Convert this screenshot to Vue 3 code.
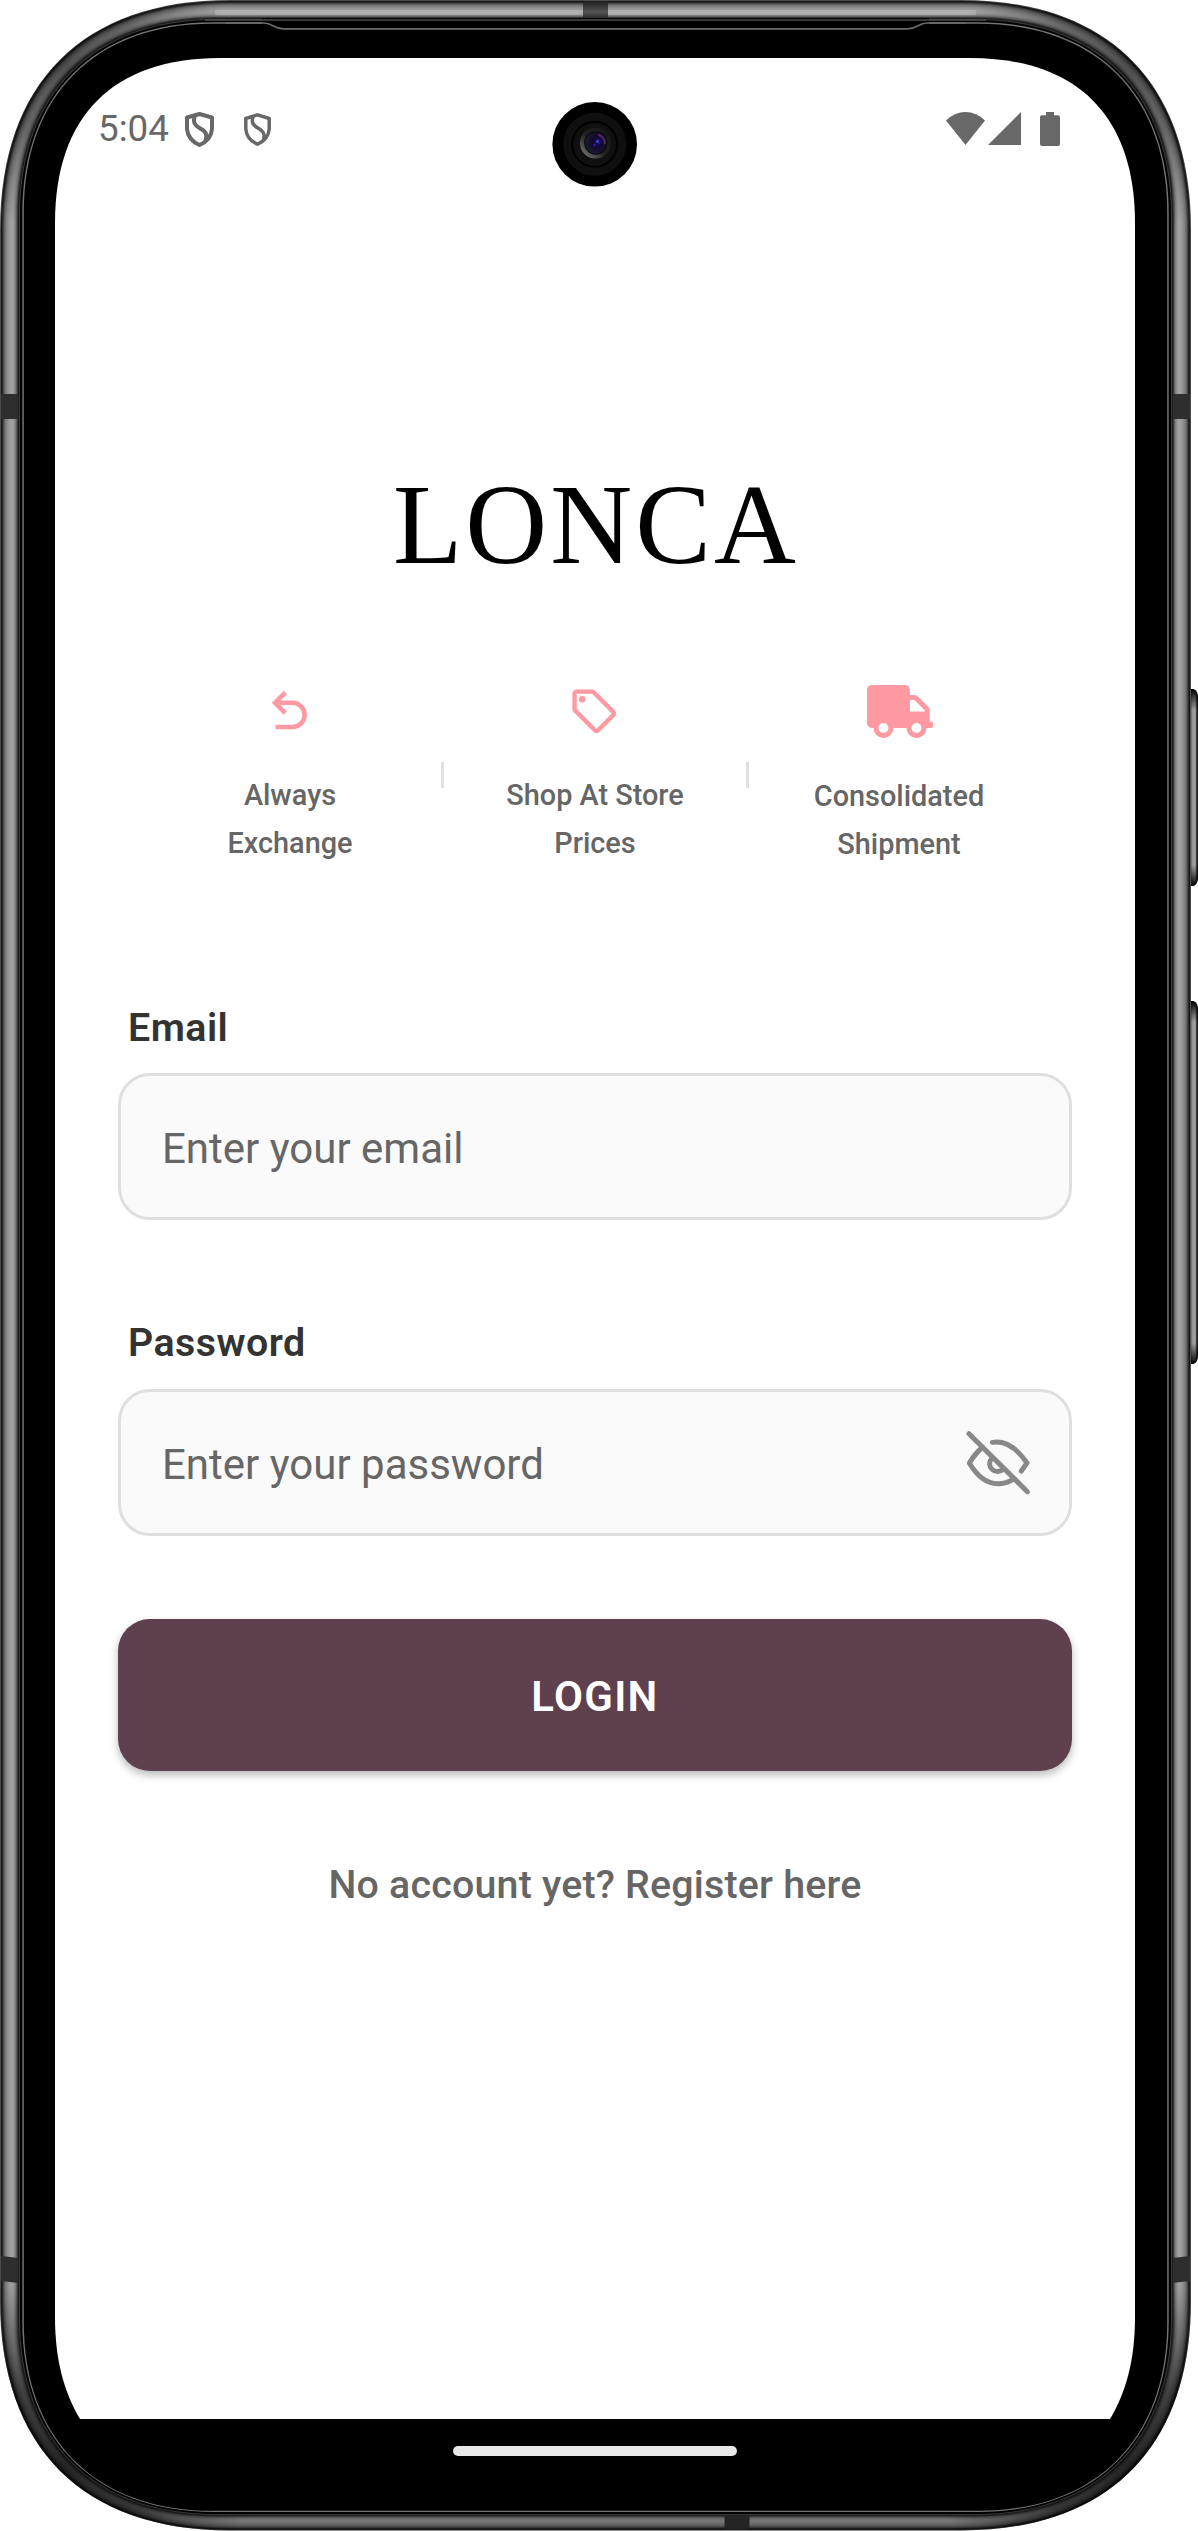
<script setup>
import { ref } from 'vue'

const email = ref('')
const password = ref('')

// Outline of the handset body, moved inwards by d pixels
function outline(d) {
  const l = d
  const t = d
  const r = 1191 - d
  const b = 2530.5 - d * 0.83
  const s = 230 - d * 1.74
  const c = 83 - d * 0.48
  return `M${l} ${t + s}C${l} ${t + c} ${l + c} ${t} ${l + s} ${t}H${r - s}C${r - c} ${t} ${r} ${t + c} ${r} ${t + s}V${b - s}C${r} ${b - c} ${r - c} ${b} ${r - s} ${b}H${l + s}C${l + c} ${b} ${l} ${b - c} ${l} ${b - s}Z`
}

const rim = [
  [0, '#4a4d4a'], [1, '#161616'], [2, '#2c2c2c'], [3, '#484848'], [4, '#626262'],
  [5, '#767676'], [6, '#828282'], [7, '#8c8c8c'], [8, '#949494'], [9, '#9a9a9a'],
  [10, '#a0a0a0'], [13, '#9a9a9a'], [14, '#8c8c8c'], [15, '#7c7c7c'], [16, '#606060'], [17, '#383838']
].map(([d, color]) => ({ d: outline(d), color }))

const inner = [
  [18, '#1c1c1c'], [19, '#3c3c3c'], [20, '#000'], [22.3, '#747474'], [23.8, '#000']
].map(([d, color]) => ({ d: outline(d), color }))

const body = outline(0)
</script>

<template>
  <div class="device">
    <svg class="frame" width="1198" height="2531" viewBox="0 0 1198 2531" aria-hidden="true">
      <defs>
        <radialGradient id="cornerTop">
          <stop offset="0" stop-color="#000" stop-opacity=".5" />
          <stop offset=".45" stop-color="#000" stop-opacity=".36" />
          <stop offset="1" stop-color="#000" stop-opacity="0" />
        </radialGradient>
        <radialGradient id="cornerBottom">
          <stop offset="0" stop-color="#000" stop-opacity=".7" />
          <stop offset=".45" stop-color="#000" stop-opacity=".54" />
          <stop offset="1" stop-color="#000" stop-opacity="0" />
        </radialGradient>
        <linearGradient id="bottomShade" x1="0" y1="0" x2="0" y2="1">
          <stop offset="0" stop-color="#000" stop-opacity="0" />
          <stop offset="1" stop-color="#000" stop-opacity=".28" />
        </linearGradient>
        <linearGradient id="key" x1="0" y1="0" x2="1" y2="0">
          <stop offset="0" stop-color="#555" />
          <stop offset=".35" stop-color="#9a9a9a" />
          <stop offset=".65" stop-color="#a4a4a4" />
          <stop offset=".85" stop-color="#2a2a2a" />
          <stop offset="1" stop-color="#111" />
        </linearGradient>
        <linearGradient id="keyEndTop" x1="0" y1="0" x2="0" y2="1">
          <stop offset="0" stop-color="#000" />
          <stop offset="1" stop-color="#000" stop-opacity="0" />
        </linearGradient>
        <linearGradient id="keyEndBottom" x1="0" y1="1" x2="0" y2="0">
          <stop offset="0" stop-color="#000" />
          <stop offset="1" stop-color="#000" stop-opacity="0" />
        </linearGradient>
        <linearGradient id="slotTop" x1="0" y1="0" x2="0" y2="1">
          <stop offset="0" stop-color="#1c1c1c" />
          <stop offset=".55" stop-color="#555" />
          <stop offset="1" stop-color="#151515" />
        </linearGradient>
        <linearGradient id="lens" x1="0" y1="1" x2="1" y2="0">
          <stop offset="0" stop-color="#8a8a8a" />
          <stop offset=".45" stop-color="#222" />
          <stop offset="1" stop-color="#141414" />
        </linearGradient>
        <radialGradient id="glass" cx=".6" cy=".45" r=".6">
          <stop offset="0" stop-color="#221880" />
          <stop offset=".35" stop-color="#100838" />
          <stop offset=".7" stop-color="#1a0e2c" />
          <stop offset="1" stop-color="#14262e" />
        </radialGradient>
        <clipPath id="bodyClip"><path :d="body" /></clipPath>
      </defs>

      <!-- power and volume keys -->
      <g>
        <path d="M1190 689h3.500q4.500 2 4.500 9v179q0 7-4.500 9H1190z" fill="url(#key)" />
        <path d="M1190 689h3.500q4.500 2 4.500 9v12h-8z" fill="url(#keyEndTop)" />
        <path d="M1190 865h8v12q0 7-4.500 9H1190z" fill="url(#keyEndBottom)" />
        <path d="M1190 1001h3.500q4.500 2 4.500 9v345q0 7-4.500 9H1190z" fill="url(#key)" />
        <path d="M1190 1001h3.500q4.500 2 4.500 9v12h-8z" fill="url(#keyEndTop)" />
        <path d="M1190 1343h8v12q0 7-4.500 9H1190z" fill="url(#keyEndBottom)" />
      </g>

      <path v-for="(layer, i) in rim" :key="'r' + i" :d="layer.d" :fill="layer.color" />
      <g clip-path="url(#bodyClip)">
        <path d="M215 12.500H976" stroke="#bcbcbc" stroke-width="5" opacity=".6" />
        <circle cx="68" cy="68" r="165" fill="url(#cornerTop)" />
        <circle cx="1123" cy="68" r="165" fill="url(#cornerTop)" />
        <circle cx="68" cy="2462" r="185" fill="url(#cornerBottom)" />
        <circle cx="1123" cy="2462" r="185" fill="url(#cornerBottom)" />
        <rect y="2260" width="1191" height="271" fill="url(#bottomShade)" />
        <path d="M1 394h18v25H1zM1172 394h18v25h-18zM1 2256l18 2v25l-18-2zM1190 2256l-18 2v25l18-2z" fill="#2e2e2e" />
        <rect x="583" y="1" width="25" height="20" fill="url(#slotTop)" />
        <rect x="724.500" y="2513" width="25" height="16" fill="#242424" />
      </g>
      <path v-for="(layer, i) in inner" :key="'i' + i" :d="layer.d" :fill="layer.color" />

      <!-- earpiece recess -->
      <path d="M262 18h667v8H262z" fill="#000" />
      <path d="M205 20H986" stroke="#4c4c4c" stroke-width="1.300" />
      <path d="M225 23H264C272 23 275 28.800 283 28.800H908C916 28.800 919 23 927 23H966" fill="none" stroke="#6c6c6c" stroke-width="1.700" />

      <path d="M55 223C55 116 113 58 220 58H970C1077 58 1135 116 1135 223V2317C1135 2360 1126 2392 1110 2419H80C64 2392 55 2360 55 2317Z" fill="#fff" />

      <g>
        <circle cx="594.700" cy="144.300" r="42.300" fill="#000" />
        <circle cx="594.700" cy="144.300" r="31.500" fill="#0f0f0f" />
        <circle cx="594.700" cy="144.300" r="23.500" fill="#000" />
        <circle cx="594.700" cy="144.300" r="21.500" fill="#101010" />
        <circle cx="595.500" cy="143" r="15.500" fill="url(#lens)" />
        <circle cx="595.700" cy="143" r="11.500" fill="#05050a" />
        <circle cx="595.700" cy="143" r="10.500" fill="url(#glass)" />
        <path d="M599 135q5 2 6 8" fill="none" stroke="#5a3368" stroke-width="2.600" stroke-linecap="round" opacity=".7" />
        <circle cx="597.500" cy="141.500" r="1.400" fill="#4a3cd8" />
        <circle cx="594.500" cy="145" r="1.100" fill="#3026a8" />
      </g>
    </svg>

    <main class="screen">
      <header class="status">
        <div class="status-left">
          <span class="clock">5:04</span>
          <svg class="shield-a" width="29" height="35" viewBox="0 0 29 35" fill="none" stroke="#686868" stroke-width="4" stroke-linejoin="round">
            <path d="M14.500 2L27 5.500V17Q26 28 14.500 33Q3 28 2 17V5.500Z" />
            <path d="M10 3.500C6 14 15 15.500 19 19C23 22.500 21 26 20.500 29" />
          </svg>
          <svg class="shield-b" width="27" height="33" viewBox="0 0 27 33" fill="none" stroke="#686868" stroke-width="3.500" stroke-linejoin="round">
            <path d="M13.500 1.800L25.200 5.500V16Q24.500 26.500 13.500 31.200Q2.500 26.500 1.800 16V5.500Z" />
            <path d="M9 3.500C6 13 13.500 14 17.500 17.500C21.500 21 20 24.500 19 28" />
          </svg>
        </div>
        <div class="status-right">
          <svg width="39" height="33" viewBox="0 0 39 33" fill="#686868"><path d="M0 8.500Q8.500 0 19.500 0T39 8.500L19.500 33Z" /></svg>
          <svg class="signal" width="33" height="33" viewBox="0 0 33 33" fill="#686868"><path d="M33 0V33H0Z" /></svg>
          <svg class="battery" width="20" height="34" viewBox="0 0 20 34" fill="#686868"><path d="M6 0h8v3.300h4q2 0 2 2V32q0 2-2 2H2q-2 0-2-2V5.300q0-2 2-2h4Z" /></svg>
        </div>
      </header>

      <h1 class="logo">LONCA</h1>

      <section class="features">
        <div class="feature">
          <div class="icon">
            <svg width="36" height="40" viewBox="0 0 36 40" fill="none" stroke="#ff9aa2" stroke-width="4.600">
              <path d="M13.300 1.500L3 11.700L13.300 22.100M3 11.700H20.500A12.150 12.150 0 0 1 20.500 36H3.500" />
            </svg>
          </div>
          <p>Always<br>Exchange</p>
        </div>
        <i class="divider"></i>
        <div class="feature">
          <div class="icon tag">
            <svg width="52.500" height="52.500" viewBox="0 0 24 24" fill="#ff9aa2">
              <path d="M21.410 11.580l-9-9C12.050 2.220 11.550 2 11 2H4c-1.100 0-2 .9-2 2v7c0 .55.22 1.050.59 1.420l9 9c.36.36.86.58 1.410.58s1.050-.22 1.410-.59l7-7c.37-.36.59-.86.59-1.410s-.23-1.060-.59-1.420zM13 20.010L4 11V4h7v-.01l9 9-7 7.020z" />
              <circle cx="6.500" cy="6.500" r="1.500" />
            </svg>
          </div>
          <p>Shop At Store<br>Prices</p>
        </div>
        <i class="divider"></i>
        <div class="feature last">
          <div class="icon">
            <svg width="66" height="53" viewBox="0 0 640 512" fill="#ff9aa2">
              <path d="M624 352h-16V243.900c0-12.700-5.100-24.900-14.100-33.900L494 110.100c-9-9-21.200-14.100-33.900-14.100H416V48c0-26.500-21.500-48-48-48H48C21.500 0 0 21.500 0 48v320c0 26.500 21.500 48 48 48h16c0 53 43 96 96 96s96-43 96-96h128c0 53 43 96 96 96s96-43 96-96h48c8.800 0 16-7.200 16-16v-32c0-8.800-7.200-16-16-16zM160 464c-26.500 0-48-21.500-48-48s21.500-48 48-48 48 21.500 48 48-21.500 48-48 48zm320 0c-26.500 0-48-21.500-48-48s21.500-48 48-48 48 21.500 48 48-21.500 48-48 48zm80-208H416V144h44.100l99.900 99.900V256z" />
            </svg>
          </div>
          <p>Consolidated<br>Shipment</p>
        </div>
      </section>

      <form class="form" @submit.prevent>
        <label for="email">Email</label>
        <div class="field"><input id="email" v-model="email" type="text" placeholder="Enter your email"></div>
        <label class="second" for="password">Password</label>
        <div class="field">
          <input id="password" v-model="password" type="password" placeholder="Enter your password">
          <svg width="70" height="70" viewBox="0 0 210 210" fill="none" stroke="#888" stroke-width="15" stroke-linecap="round" stroke-linejoin="round">
            <path d="M18 23L193 197" />
            <path d="M88 49C135 40 168 76 192 111L175 135" />
            <path d="M56 66C40 80 29 95 19 111C45 155 75 173 105 173C122 173 137 168 150 160" />
            <path d="M86 97A23.500 23.500 0 0 0 121 129" />
          </svg>
        </div>
        <button type="submit">LOGIN</button>
        <a class="register">No account yet? Register here</a>
      </form>

      <div class="home"></div>
    </main>
  </div>
</template>

<style>
body {
  margin: 0;
  background: #fff;
}
</style>

<style scoped>
.device {
  position: relative;
  width: 1198px;
  height: 2531px;
  overflow: hidden;
  font-family: Roboto, "Liberation Sans", sans-serif;
}

.frame {
  position: absolute;
  inset: 0;
}

svg {
  display: block;
}

.screen {
  position: relative;
  box-sizing: border-box;
  display: flex;
  flex-direction: column;
  width: 1080px;
  height: 2482px;
  margin-left: 55px;
  padding-top: 106px;
}

.status {
  display: flex;
  justify-content: space-between;
  height: 44px;
  padding: 0 75px 0 43px;
}

.status-left,
.status-right {
  display: flex;
  align-items: flex-start;
}

.clock {
  width: 87px;
  font-size: 36.75px;
  line-height: 45px;
  color: #686868;
}

.shield-a {
  margin-top: 6px;
}

.shield-b {
  margin: 7px 0 0 29.500px;
}

.status-right {
  padding-top: 6px;
}

.signal {
  margin-left: 3.500px;
}

.battery {
  margin-left: 19px;
}

.logo {
  margin: 315px 0 0;
  padding-left: 2px;
  font: 400 113.500px/120px "Liberation Serif", serif;
  letter-spacing: 3px;
  text-align: center;
  color: #000;
}

.features {
  display: flex;
  margin: 99px 84px 0;
  height: 183px;
}

.feature {
  flex: 1;
}

.icon {
  display: flex;
  align-items: center;
  justify-content: center;
  height: 54px;
}

.icon.tag {
  padding-right: 2px;
}

.feature p {
  margin: 33px 0 0;
  font-size: 28.875px;
  font-weight: 500;
  line-height: 48px;
  text-align: center;
  color: #666;
}

.feature.last p {
  margin-top: 34px;
  padding-right: 2px;
}

.divider {
  width: 3px;
  height: 26px;
  margin-top: 78px;
  background: #e0e0e0;
}

.form {
  display: flex;
  flex-direction: column;
  margin: 136px 63px 0;
}

label {
  height: 48px;
  margin: 0 0 22px 10px;
  font-size: 39.375px;
  font-weight: 600;
  line-height: 49px;
  letter-spacing: .45px;
  color: #333;
}

label.second {
  line-height: 47px;
}

.field {
  box-sizing: border-box;
  display: flex;
  align-items: center;
  width: 954px;
  height: 147px;
  margin-bottom: 99px;
  padding: 0 36px 0 41px;
  background: #fafafa;
  border: 3px solid #dfdfdf;
  border-radius: 32px;
}

.field svg {
  margin-bottom: 3px;
}

.second + .field {
  margin-bottom: 83px;
}

input {
  flex: 1;
  min-width: 0;
  height: 60px;
  padding: 4px 0 0;
  font: 400 42px/56px Roboto, sans-serif;
  color: #333;
  background: none;
  border: 0;
  outline: 0;
}

input::placeholder {
  color: #666;
  opacity: 1;
}

button {
  height: 152px;
  padding: 3px 0 0;
  font: 600 42px/149px Roboto, sans-serif;
  letter-spacing: 1.300px;
  color: #fff;
  background: #5e404f;
  border: 0;
  border-radius: 32px;
  box-shadow: 0 4px 8px rgba(0, 0, 0, .28);
}

.register {
  margin-top: 90px;
  font-size: 39.375px;
  font-weight: 500;
  line-height: 48px;
  letter-spacing: .2px;
  text-align: center;
  color: #666;
}

.home {
  width: 284px;
  height: 10px;
  margin: auto auto 26px;
  background: #e8e8e8;
  border-radius: 5px;
}
</style>
